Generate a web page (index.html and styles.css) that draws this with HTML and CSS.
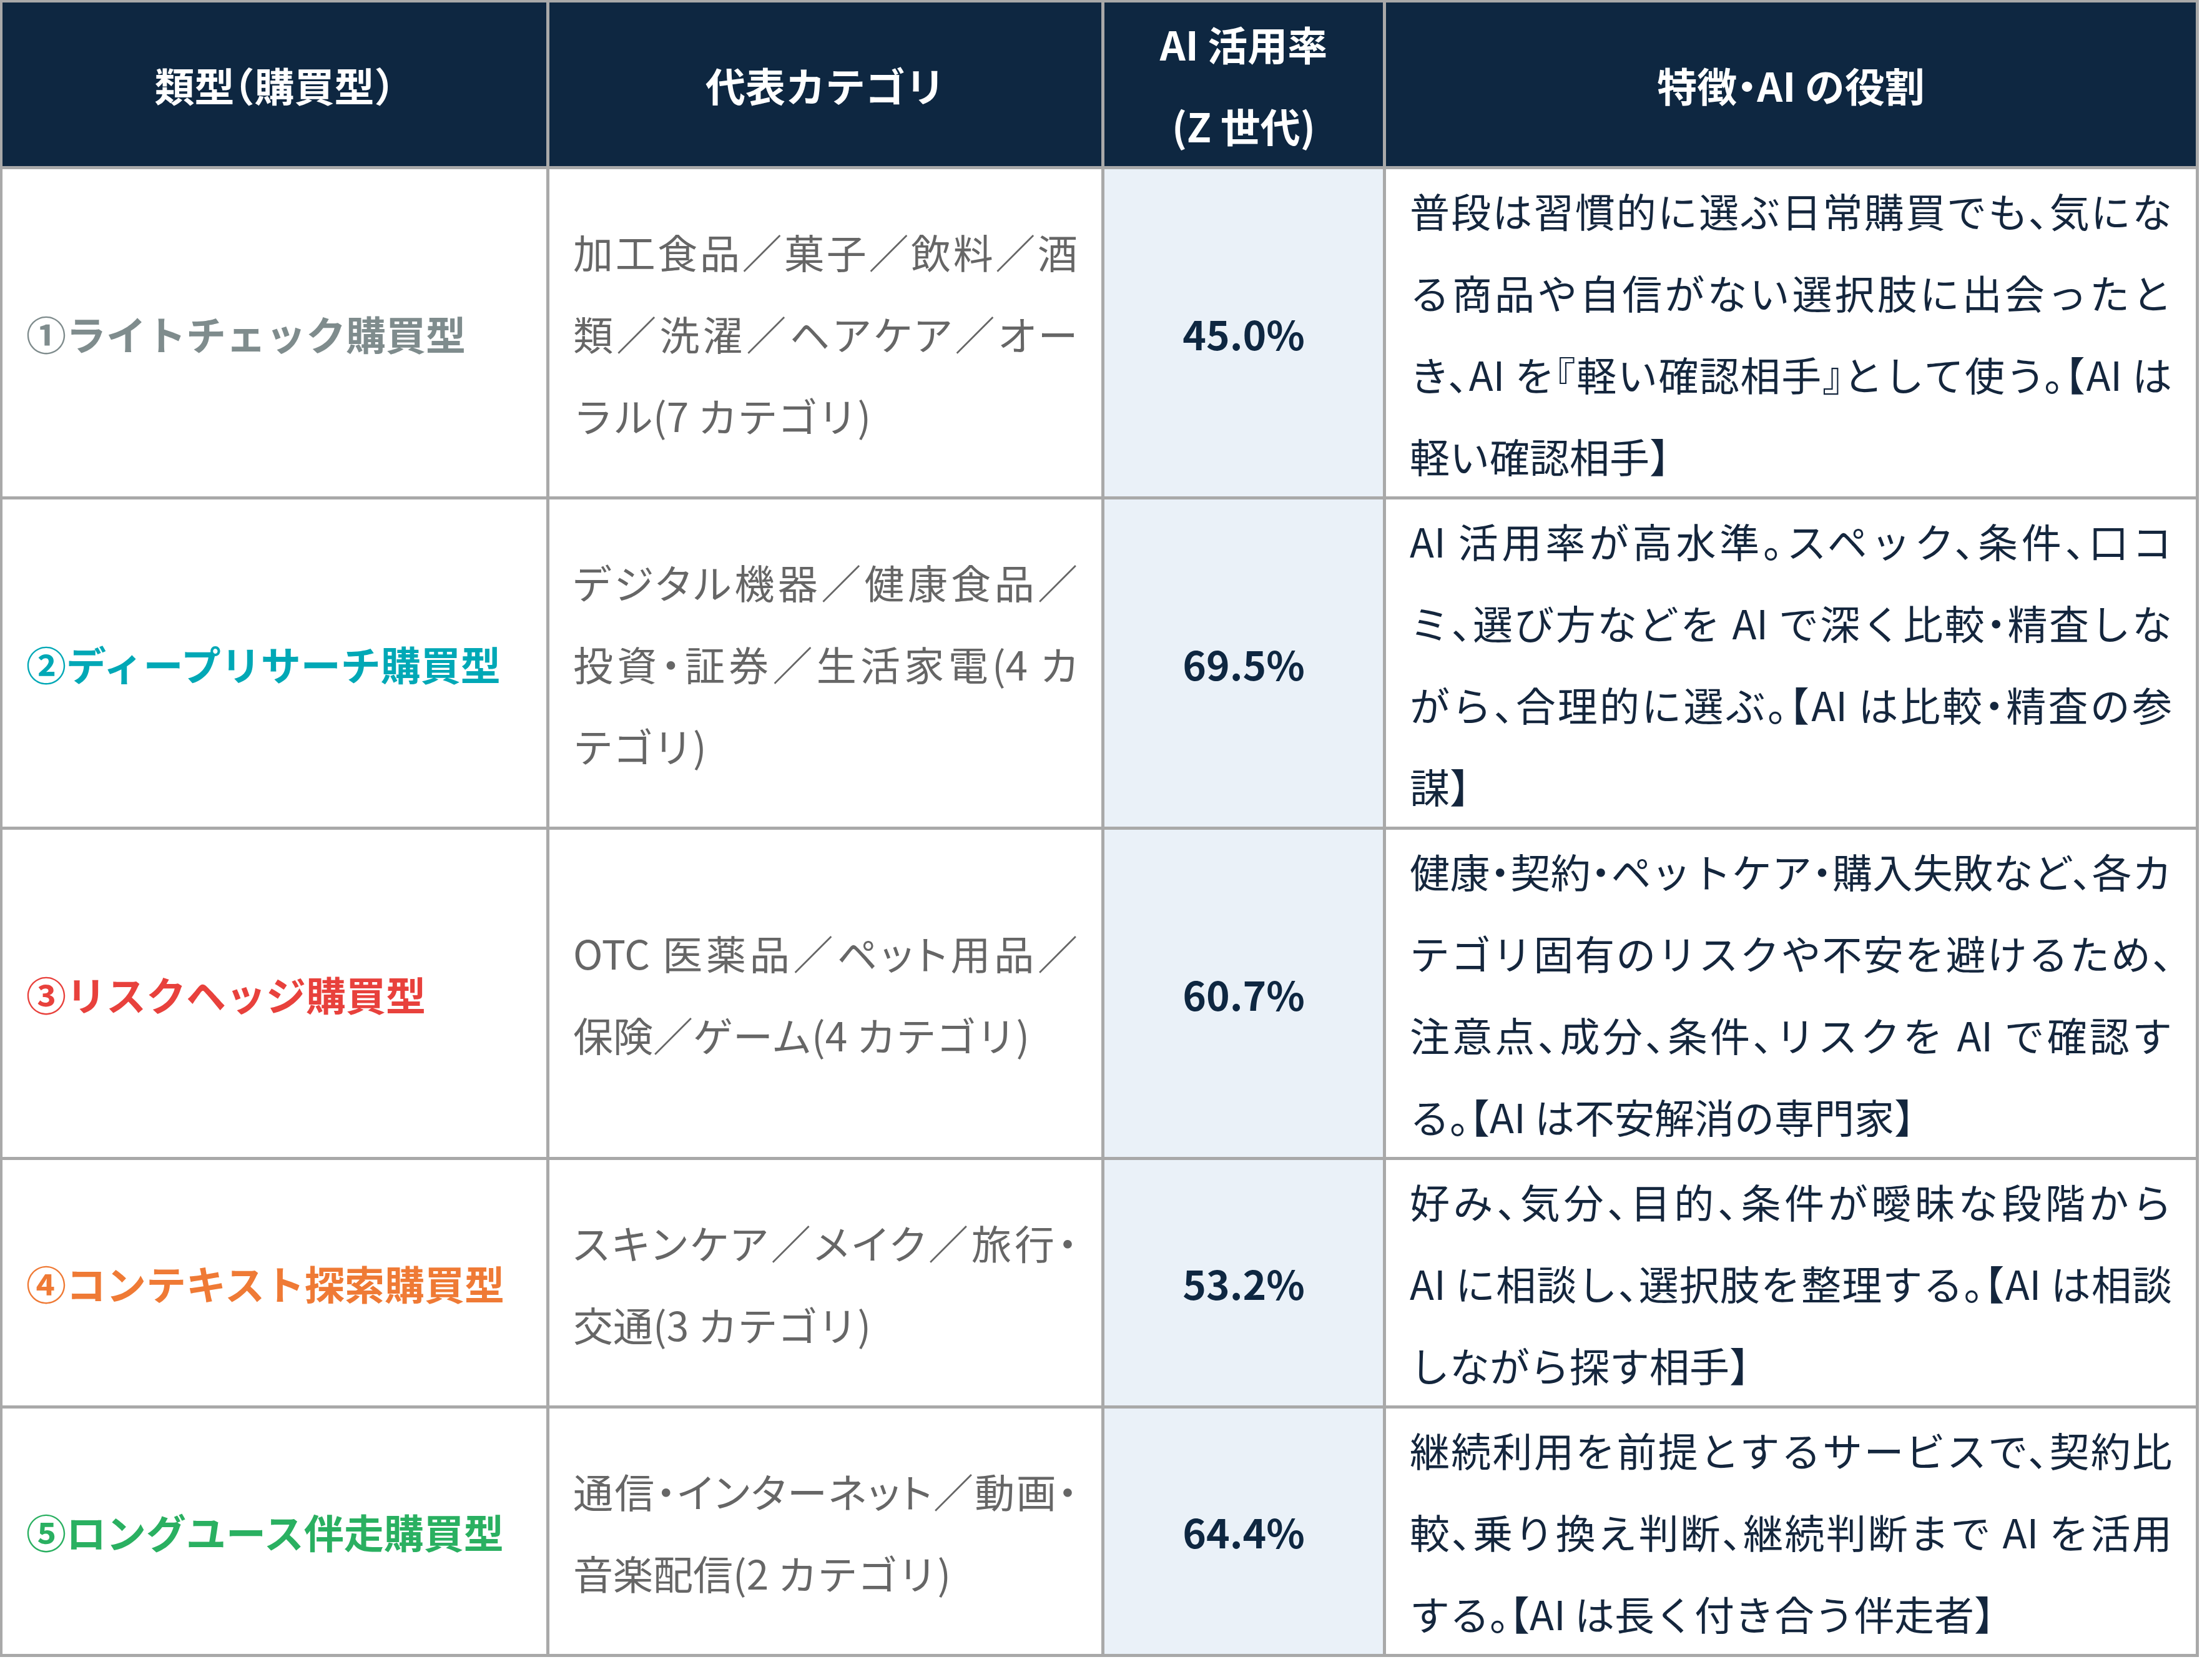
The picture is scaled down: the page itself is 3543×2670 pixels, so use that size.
FILE: index.html
```html
<!DOCTYPE html>
<html lang="ja">
<head>
<meta charset="utf-8">
<title>購買型別 AI 活用率</title>
<link rel="stylesheet" href="styles.css">
</head>
<body>
<table class="types">
  <colgroup>
    <col class="c-type">
    <col class="c-cat">
    <col class="c-rate">
    <col class="c-role">
  </colgroup>
  <thead>
    <tr>
      <th>類型（購買型）</th>
      <th>代表カテゴリ</th>
      <th>AI 活用率<br>(Z 世代)</th>
      <th>特徴・AI の役割</th>
    </tr>
  </thead>
  <tbody>
    <tr>
      <td class="type t1">①ライトチェック購買型</td>
      <td class="cat">
        <span class="line fill">加工食品／菓子／飲料／酒</span>
        <span class="line fill">類／洗濯／ヘアケア／オー</span>
        <span class="line">ラル(7 カテゴリ)</span>
      </td>
      <td class="rate">45.0%</td>
      <td class="role">
        <span class="line fill">普段は習慣的に選ぶ日常購買でも、気にな</span>
        <span class="line fill">る商品や自信がない選択肢に出会ったと</span>
        <span class="line fill">き、AI を『軽い確認相手』として使う。【AI は</span>
        <span class="line">軽い確認相手】</span>
      </td>
    </tr>
    <tr>
      <td class="type t2">②ディープリサーチ購買型</td>
      <td class="cat">
        <span class="line fill">デジタル機器／健康食品／</span>
        <span class="line fill">投資・証券／生活家電(4 カ</span>
        <span class="line">テゴリ)</span>
      </td>
      <td class="rate">69.5%</td>
      <td class="role">
        <span class="line fill">AI 活用率が高水準。スペック、条件、口コ</span>
        <span class="line fill">ミ、選び方などを AI で深く比較・精査しな</span>
        <span class="line fill">がら、合理的に選ぶ。【AI は比較・精査の参</span>
        <span class="line">謀】</span>
      </td>
    </tr>
    <tr>
      <td class="type t3">③リスクヘッジ購買型</td>
      <td class="cat">
        <span class="line fill">OTC 医薬品／ペット用品／</span>
        <span class="line">保険／ゲーム(4 カテゴリ)</span>
      </td>
      <td class="rate">60.7%</td>
      <td class="role">
        <span class="line fill">健康・契約・ペットケア・購入失敗など、各カ</span>
        <span class="line fill">テゴリ固有のリスクや不安を避けるため、</span>
        <span class="line fill">注意点、成分、条件、リスクを AI で確認す</span>
        <span class="line">る。【AI は不安解消の専門家】</span>
      </td>
    </tr>
    <tr>
      <td class="type t4">④コンテキスト探索購買型</td>
      <td class="cat">
        <span class="line fill">スキンケア／メイク／旅行・</span>
        <span class="line">交通(3 カテゴリ)</span>
      </td>
      <td class="rate">53.2%</td>
      <td class="role">
        <span class="line fill">好み、気分、目的、条件が曖昧な段階から</span>
        <span class="line fill">AI に相談し、選択肢を整理する。【AI は相談</span>
        <span class="line">しながら探す相手】</span>
      </td>
    </tr>
    <tr>
      <td class="type t5">⑤ロングユース伴走購買型</td>
      <td class="cat">
        <span class="line fill">通信・インターネット／動画・</span>
        <span class="line">音楽配信(2 カテゴリ)</span>
      </td>
      <td class="rate">64.4%</td>
      <td class="role">
        <span class="line fill">継続利用を前提とするサービスで、契約比</span>
        <span class="line fill">較、乗り換え判断、継続判断まで AI を活用</span>
        <span class="line">する。【AI は長く付き合う伴走者】</span>
      </td>
    </tr>
  </tbody>
</table>
</body>
</html>
```

FILE: styles.css
```css
html, body {
  margin: 0;
  padding: 0;
  background: #ffffff;
}

body {
  font-family: "Noto Sans CJK JP", "Noto Sans", sans-serif;
}

.types {
  border-collapse: separate;
  border-spacing: 0;
  table-layout: fixed;
  width: 3522px;
  border-top: 4px solid #a9a9a9;
  border-left: 4px solid #a9a9a9;
  font-size: 64px;
  line-height: 131px;
  font-feature-settings: "halt" 1;
}

.c-type { width: 876px; }
.c-cat  { width: 889px; }
.c-rate { width: 451px; }
.c-role { width: 1302px; }

.types th,
.types td {
  border-right: 5px solid #a9a9a9;
  border-bottom: 5px solid #a9a9a9;
  padding: 0 38px;
  vertical-align: middle;
}

.types th {
  background: #0e2741;
  color: #ffffff;
  font-weight: 700;
  text-align: center;
}

.line {
  display: block;
}

.line.fill {
  text-align: justify;
  text-align-last: justify;
}

.cat .line.fill {
  font-feature-settings: "palt" 1;
}

.type {
  font-weight: 700;
  white-space: nowrap;
  padding-left: 36px;
}

.t1 { color: #7f8c8d; }
.t2 { color: #00a8b6; }
.t3 { color: #e8413c; }
.t4 { color: #ef7a35; }
.t5 { color: #2ab061; }

.cat {
  color: #666666;
}

.rate {
  background: #eaf1f8;
  color: #0e2741;
  font-weight: 700;
  text-align: center;
}

.role {
  color: #14263d;
}
```
